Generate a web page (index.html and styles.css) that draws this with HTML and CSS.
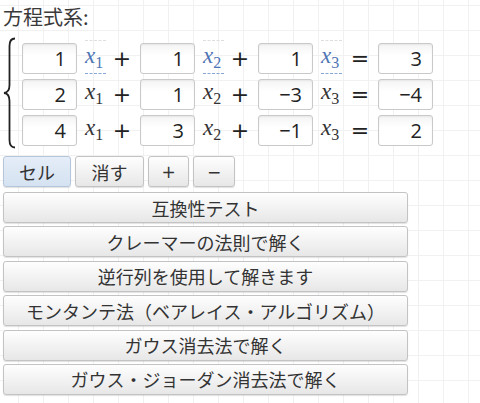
FILE: index.html
```html
<!DOCTYPE html>
<html lang="ja">
<head>
<meta charset="utf-8">
<link rel="stylesheet" href="styles.css">
</head>
<body>
<div class="page">
  <div class="title">方程式系:</div>
  <div class="system">
    <svg class="brace" width="16" height="112" viewBox="0 0 16 112">
      <path d="M13,1.5 Q7.5,1.5 7.5,9 L7.5,48 Q7.5,55.5 2,56 Q7.5,56.5 7.5,64 L7.5,103 Q7.5,110.5 13,110.5" fill="none" stroke="#222" stroke-width="1.8"/>
    </svg>
    <div class="rows">
      <div class="row">
        <div class="cell">1</div><div class="var active"><i>x</i><sub>1</sub></div><div class="op">+</div>
        <div class="cell">1</div><div class="var active"><i>x</i><sub>2</sub></div><div class="op">+</div>
        <div class="cell">1</div><div class="var active"><i>x</i><sub>3</sub></div><div class="op eq">=</div>
        <div class="cell">3</div>
      </div>
      <div class="row">
        <div class="cell">2</div><div class="var"><i>x</i><sub>1</sub></div><div class="op">+</div>
        <div class="cell">1</div><div class="var"><i>x</i><sub>2</sub></div><div class="op">+</div>
        <div class="cell">−3</div><div class="var"><i>x</i><sub>3</sub></div><div class="op eq">=</div>
        <div class="cell">−4</div>
      </div>
      <div class="row">
        <div class="cell">4</div><div class="var"><i>x</i><sub>1</sub></div><div class="op">+</div>
        <div class="cell">3</div><div class="var"><i>x</i><sub>2</sub></div><div class="op">+</div>
        <div class="cell">−1</div><div class="var"><i>x</i><sub>3</sub></div><div class="op eq">=</div>
        <div class="cell">2</div>
      </div>
    </div>
  </div>
  <div class="tools">
    <button class="btn sel w68">セル</button>
    <button class="btn w69">消す</button>
    <button class="btn w41">+</button>
    <button class="btn w42">−</button>
  </div>
  <div class="methods">
    <button class="btn wide">互換性テスト</button>
    <button class="btn wide">クレーマーの法則で解く</button>
    <button class="btn wide">逆行列を使用して解きます</button>
    <button class="btn wide">モンタンテ法（ベアレイス・アルゴリズム）</button>
    <button class="btn wide">ガウス消去法で解く</button>
    <button class="btn wide">ガウス・ジョーダン消去法で解く</button>
  </div>
</div>
</body>
</html>
```

FILE: styles.css
```css
html, body {
  margin: 0;
  padding: 0;
}
body {
  width: 480px;
  height: 403px;
  overflow: hidden;
  background-color: #fff;
  background-image:
    linear-gradient(to right, #f1f1f1 1px, transparent 1px),
    linear-gradient(to bottom, #f1f1f1 1px, transparent 1px);
  background-size: 25px 25px;
  background-position: 18px 5px;
  font-family: "Noto Sans CJK JP", "Noto Sans", sans-serif;
  color: #333;
}
.page {
  padding-left: 3px;
}
.title {
  font-size: 20px;
  line-height: 30px;
  padding-top: 2px;
  height: 31px;
  color: #3a3a3a;
}
.system {
  display: flex;
  align-items: flex-start;
  padding-top: 10px;
}
.brace {
  margin-top: -6px;
  margin-bottom: -6px;
  margin-left: -1px;
  flex: none;
}
.rows {
  display: flex;
  flex-direction: column;
  gap: 5px;
  margin-left: 4px;
}
.row {
  display: flex;
  align-items: center;
  height: 31px;
}
.cell {
  box-sizing: border-box;
  width: 55px;
  height: 31px;
  border: 1px solid #c9c9c9;
  border-radius: 3px;
  background: linear-gradient(#f4f4f4, #fff 40%);
  box-shadow: inset 0 1px 2px rgba(0,0,0,0.06);
  text-align: right;
  padding-right: 10px;
  font-family: "Open Sans", "Noto Sans", sans-serif;
  font-size: 20px;
  line-height: 29px;
  color: #222;
}
.var {
  box-sizing: border-box;
  width: 31px;
  height: 31px;
  padding-left: 8px;
  font-family: "Liberation Serif", serif;
  font-size: 23px;
  line-height: 26px;
  color: #333;
  position: relative;
}
.var i {
  font-style: italic;
}
.var sub {
  font-size: 16px;
  font-style: normal;
  vertical-align: -5px;
  line-height: 0;
}
.var.active {
  color: #4d74b4;
}
.var.active::before {
  content: "";
  position: absolute;
  left: 8px;
  width: 21px;
  top: -3px;
  border-top: 1px dashed #dedede;
}
.var.active::after {
  content: "";
  position: absolute;
  left: 8px;
  width: 21px;
  bottom: 0;
  border-bottom: 1px dashed #86a6d6;
}
.op {
  width: 32px;
  text-align: center;
  font-family: "DejaVu Sans", sans-serif;
  font-size: 22px;
  line-height: 31px;
  color: #222;
  padding-right: 4px;
  box-sizing: border-box;
}
.op.eq {
  width: 34px;
  padding-right: 2px;
}
.tools {
  display: flex;
  gap: 4px;
  margin-top: 10px;
}
.btn {
  box-sizing: border-box;
  height: 31px;
  border: 1px solid #c3c3c3;
  border-radius: 3px;
  background: linear-gradient(#fefefe, #e7e7e7);
  box-shadow: 0 1px 1px rgba(0,0,0,0.12);
  font-family: "Noto Sans CJK JP", "Noto Sans", sans-serif;
  font-size: 18px;
  line-height: 28px;
  color: #333;
  padding: 0;
  margin: 0;
  text-align: center;
}
.btn.sel {
  background: linear-gradient(#e4edf8, #d5e2f1);
  border-color: #b6c6da;
}
.w68 { width: 68px; }
.w69 { width: 69px; }
.w41 { width: 41px; font-family: "DejaVu Sans", sans-serif; font-size: 17px; }
.w42 { width: 42px; font-family: "DejaVu Sans", sans-serif; font-size: 17px; }
.methods {
  display: flex;
  flex-direction: column;
  gap: 3.4px;
  margin-top: 5px;
}
.wide {
  width: 405px;
}
```
